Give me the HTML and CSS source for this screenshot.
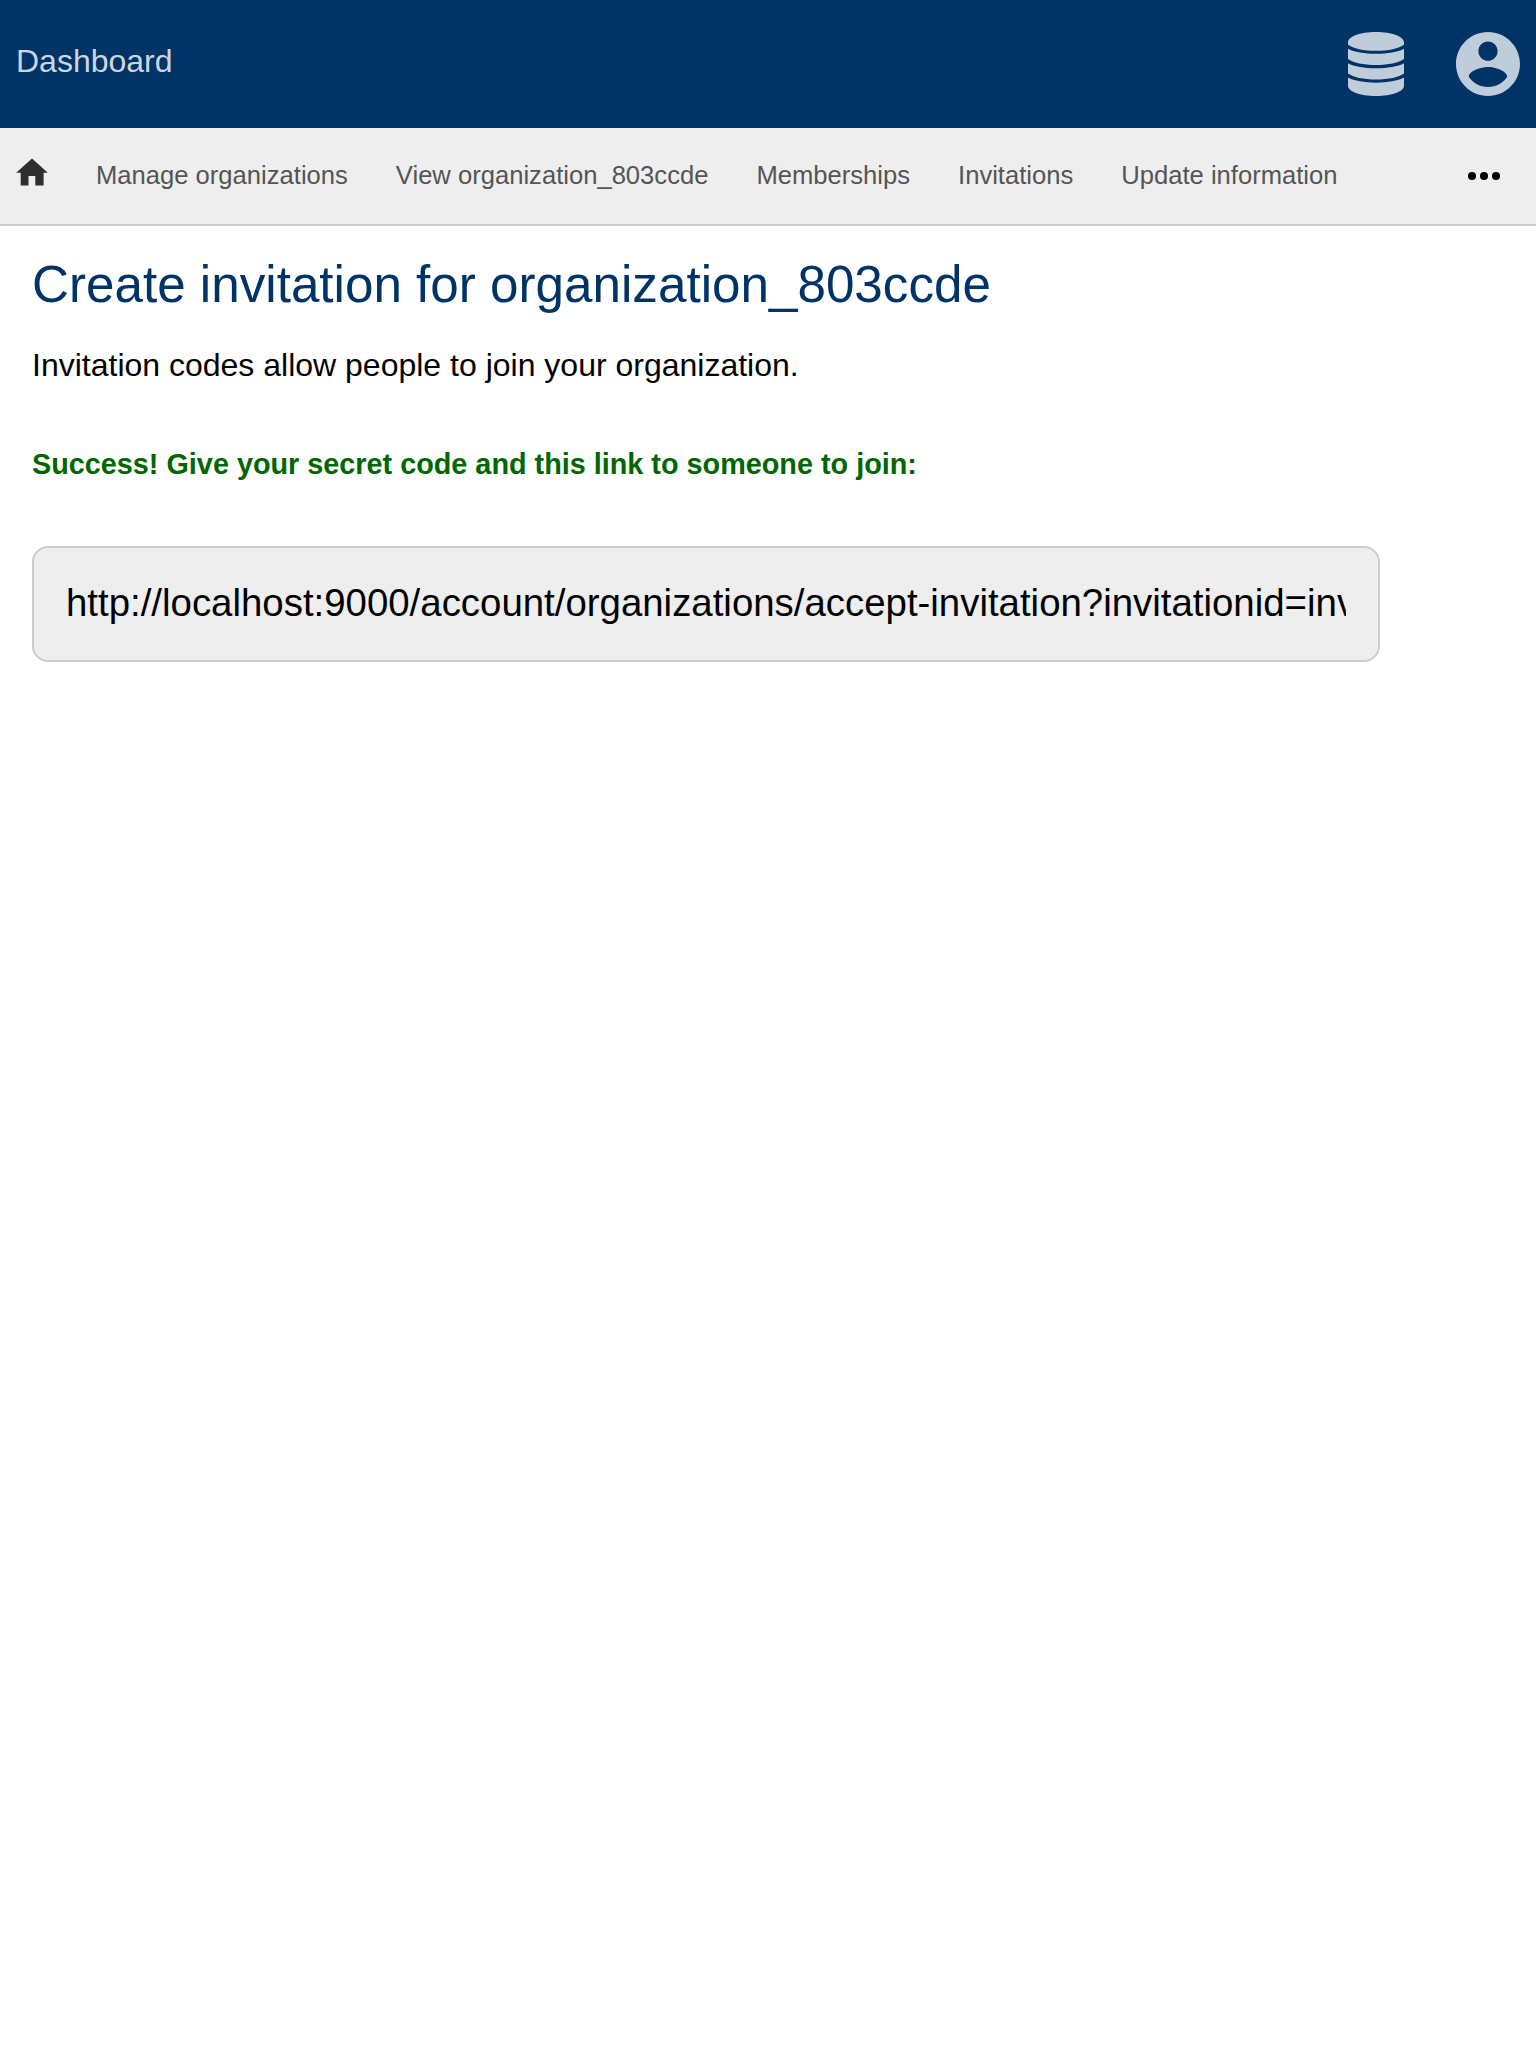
FILE: index.html
```html
<!DOCTYPE html>
<html lang="en">
<head>
<meta charset="utf-8">
<title>Create invitation</title>
<link rel="stylesheet" href="styles.css">
</head>
<body>
<header class="header">
  <a class="title">Dashboard</a>
  <div class="menus">
    <svg class="db" viewBox="0 0 56 64"><path d="M0 10.500C0 4.500 12 0 28 0s28 4.500 28 10.500v2.200C51 16.500 40.500 18.800 28 18.800S5 16.500 0 12.700zM0 16.700c6 3.300 16.500 5.100 28 5.100s22-1.800 28-5.100V27c-5 3.700-15.500 6-28 6S5 30.700 0 27zM0 31.200c6 3.300 16.500 5.100 28 5.100s22-1.800 28-5.100v10.300c-5 3.700-15.500 6-28 6S5 45.200 0 41.500zM0 45.600c6 3.300 16.500 5.100 28 5.100s22-1.800 28-5.100v8.100C56 59.500 44 64 28 64S0 59.500 0 53.700z"/></svg>
    <svg class="account" viewBox="2 2 20 20"><path d="M12 2C6.480 2 2 6.480 2 12s4.480 10 10 10 10-4.480 10-10S17.520 2 12 2zm0 3c1.660 0 3 1.340 3 3s-1.340 3-3 3-3-1.340-3-3 1.340-3 3-3zm0 14.200c-2.500 0-4.710-1.280-6-3.220.030-1.990 4-3.080 6-3.080 1.990 0 5.970 1.090 6 3.080-1.290 1.940-3.500 3.220-6 3.220z"/></svg>
  </div>
</header>
<nav class="nav">
  <svg class="home" viewBox="0 0 32 28"><path d="M16 .5 31.800 14.700H27.600V27.600H19.300V18H12.500V27.600H4.700V14.700H.2z"/></svg>
  <a>Manage organizations</a>
  <a>View organization_803ccde</a>
  <a>Memberships</a>
  <a>Invitations</a>
  <a>Update information</a>
  <svg class="more" viewBox="0 0 32 8"><circle cx="4" cy="4" r="4"/><circle cx="16" cy="4" r="4"/><circle cx="28" cy="4" r="4"/></svg>
</nav>
<main class="content">
  <h1>Create invitation for organization_803ccde</h1>
  <p class="intro">Invitation codes allow people to join your organization.</p>
  <p class="success">Success! Give your secret code and this link to someone to join:</p>
  <input class="link" readonly value="http://localhost:9000/account/organizations/accept-invitation?invitationid=invitation_1">
</main>
</body>
</html>
```
FILE: styles.css
```css
* { box-sizing: border-box; }
body {
  margin: 0;
  min-height: 2048px;
  background: #fff;
  color: #000;
  font-family: "Liberation Sans", Arial, sans-serif;
  font-size: 32px;
}
.header {
  display: flex;
  justify-content: space-between;
  height: 128px;
  padding: 0 16px;
  background: #036;
}
.title { line-height: 122px; color: #ccd6e0; }
.menus { display: flex; align-items: center; gap: 52px; fill: #bfccd9; }
.db { width: 56px; height: 64px; }
.account { width: 64px; height: 64px; }
.nav {
  display: flex;
  align-items: center;
  gap: 48px;
  height: 98px;
  padding: 0 36px 0 16px;
  border-bottom: 2px solid #ccc;
  background: #eee;
  color: #555;
  font-size: 25.6px;
  line-height: 95px;
}
.nav a { height: 96px; }
.home { width: 32px; height: 28px; margin-bottom: 8px; fill: #2e2e2e; }
.more { width: 32px; height: 8px; margin-left: auto; fill: #000; }
.content { padding: 29px 32px; }
h1 {
  margin: 0;
  color: #036;
  font-size: 51.2px;
  font-weight: 400;
  line-height: 60px;
}
.intro { margin: 30px 0 0; line-height: 40px; }
.success {
  margin: 61px 0 0;
  color: #060;
  font-size: 28.8px;
  font-weight: 700;
  line-height: 36px;
}
.link {
  display: block;
  width: 1348px;
  height: 116px;
  margin-top: 64px;
  padding: 32px 32px 34px;
  border: 2px solid #ccc;
  border-radius: 16px;
  outline: 0;
  background: #eee;
  color: #000;
  font: 38.4px "Liberation Sans", Arial, sans-serif;
}
```
